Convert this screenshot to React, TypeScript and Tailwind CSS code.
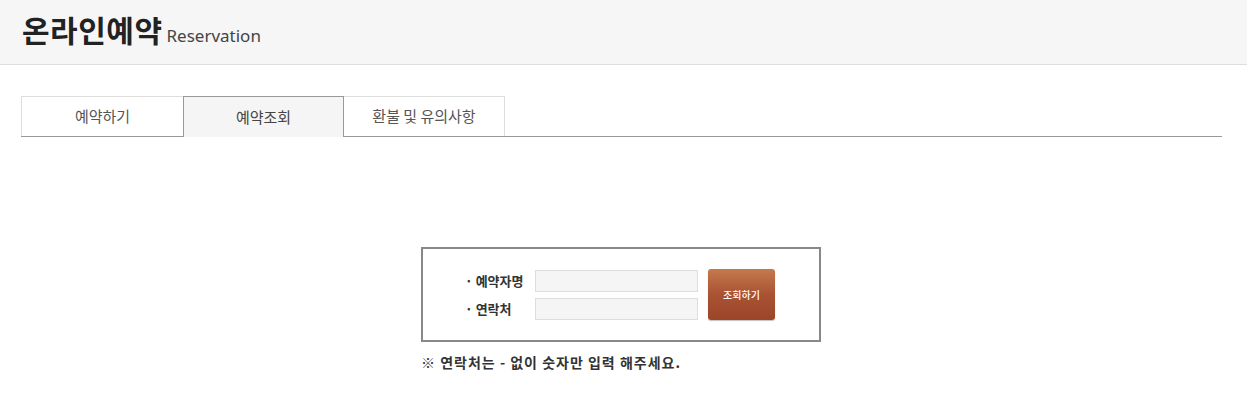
export default function App() {
  const tabs = ['예약하기', '예약조회', '환불 및 유의사항']
  const active = 1

  return (
    <div className="min-h-screen bg-white text-[#333]" style={{ fontFamily: '"Noto Sans", "Noto Sans CJK KR", sans-serif' }}>
      <header className="h-[65px] bg-[#f6f6f6] border-b border-[#dddddd] flex items-end px-[22px] pb-[20px]">
        <h1 className="text-[30px] leading-none font-bold text-[#222] tracking-[0.5px]" style={{ fontFamily: '"Noto Sans CJK KR", sans-serif' }}>
          온라인예약
        </h1>
        <span className="ml-[4px] text-[17px] leading-none text-[#444]">Reservation</span>
      </header>

      <div className="pl-[21px] pr-[25px] pt-[31px]">
        <ul className="flex border-b border-[#999999] h-[41px]" style={{ fontFamily: '"Noto Sans CJK KR", sans-serif' }}>
          {tabs.map((t, i) => (
            <li
              key={t}
              className={
                i === active
                  ? 'w-[161px] h-[41px] -mb-px border border-b-0 border-[#999999] bg-[#f5f5f5] flex items-center justify-center text-[15px] text-[#444]'
                  : i === 0
                  ? 'w-[162px] h-[40px] border-l border-t border-[#dddddd] flex items-center justify-center text-[15px] text-[#555]'
                  : 'w-[161px] h-[40px] border-t border-r border-[#dddddd] flex items-center justify-center text-[15px] text-[#555]'
              }
            >
              {t}
            </li>
          ))}
        </ul>

        <div className="flex justify-center pt-[110px] pr-px">
          <div>
            <div className="w-[400px] h-[95px] border-2 border-[#888888] pl-[42px] pt-[20px] flex" style={{ fontFamily: '"Noto Sans CJK KR", sans-serif' }}>
              <div className="flex flex-col gap-[6px] pt-px">
                <div className="flex items-center h-[22px]">
                  <span className="w-[70px] text-[13px] font-bold text-[#333]">· 예약자명</span>
                  <input className="w-[163px] h-[22px] border border-[#dddddd] bg-[#f5f5f5] outline-none" />
                </div>
                <div className="flex items-center h-[22px]">
                  <span className="w-[70px] text-[13px] font-bold text-[#333]">· 연락처</span>
                  <input className="w-[163px] h-[22px] border border-[#dddddd] bg-[#f5f5f5] outline-none" />
                </div>
              </div>
              <button className="ml-[10px] w-[67px] h-[51px] rounded-[3px] bg-gradient-to-b from-[#c47a4c] via-[#a95234] to-[#9c4629] text-white text-[10px] font-medium shadow-[0_1px_1px_rgba(0,0,0,0.25)]">
                조회하기
              </button>
            </div>
            <p className="mt-[10px] text-[14px] tracking-[1px] font-bold text-[#333]" style={{ fontFamily: '"Noto Sans CJK KR", sans-serif' }}>
              ※ 연락처는 - 없이 숫자만 입력 해주세요.
            </p>
          </div>
        </div>
      </div>
    </div>
  )
}
